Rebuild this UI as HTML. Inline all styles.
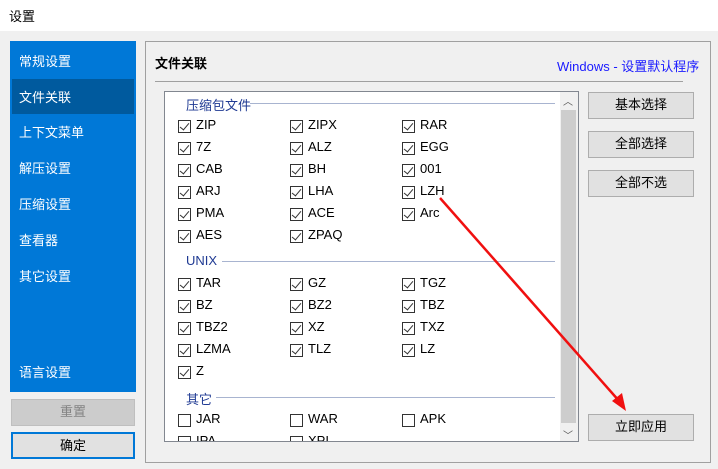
<!DOCTYPE html>
<html><head><meta charset="utf-8"><style>
*{margin:0;padding:0;box-sizing:border-box}
body{width:718px;height:469px;background:#f0f0f0;font-family:"Liberation Sans","Noto Sans CJK SC",sans-serif;font-size:13px;position:relative;overflow:hidden;color:#000}
.a{position:absolute;white-space:nowrap}
.side{left:10px;top:41px;width:126px;height:351px;background:#0078d7}
.si{position:absolute;left:9px;color:#fff;font-size:13px}
.btn{position:absolute;background:#e1e1e1;border:1px solid #adadad;text-align:center;line-height:24px;font-size:13px}
.cb{position:absolute;width:13px;height:13px;border:1px solid #333;background:#fff}
.cb.c::after{content:"";position:absolute;left:3px;top:0px;width:4px;height:8px;border:solid #333;border-width:0 1.5px 1.5px 0;transform:rotate(40deg)}
.lb{position:absolute;font-size:13px}
.gh{position:absolute;color:#1f3a93;font-size:13px}
.gl{position:absolute;height:1px;background:#a8b4d0}
</style></head><body>
<div class="a" style="left:0;top:0;width:718px;height:31px;background:#fff"></div>
<div class="a" style="left:9px;top:6px;font-size:13px">设置</div>
<div class="a side">
<div class="a" style="left:2px;top:38px;width:122px;height:35px;background:#005a9e"></div>
<div class="si" style="top:10px">常规设置</div>
<div class="si" style="top:46px">文件关联</div>
<div class="si" style="top:81px">上下文菜单</div>
<div class="si" style="top:117px">解压设置</div>
<div class="si" style="top:153px">压缩设置</div>
<div class="si" style="top:189px">查看器</div>
<div class="si" style="top:225px">其它设置</div>
<div class="si" style="top:321px">语言设置</div>
</div>
<div class="btn" style="left:11px;top:399px;width:124px;height:27px;background:#cccccc;border-color:#bfbfbf;color:#838383">重置</div>
<div class="btn" style="left:11px;top:432px;width:124px;height:27px;border:2px solid #0078d7;line-height:23px">确定</div>
<div class="a" style="left:145px;top:41px;width:566px;height:422px;border:1px solid #a0a0a0"></div>
<div class="a" style="left:155px;top:53px;font-weight:bold">文件关联</div>
<div class="a" style="left:557px;top:56px;color:#1a1aff">Windows - 设置默认程序</div>
<div class="a" style="left:155px;top:81px;width:528px;height:1px;background:#a0a0a0"></div>
<div class="a" style="left:164px;top:91px;width:415px;height:351px;background:#fff;border:1px solid #828790;overflow:hidden">
<div class="a" style="left:395px;top:0;width:18px;height:349px;background:#f0f0f0"></div>
<div class="a" style="left:396px;top:18px;width:15px;height:313px;background:#cdcdcd"></div>
<div class="a" style="left:398px;top:1px;font-size:10px;color:#555">︿</div>
<div class="a" style="left:398px;top:335px;font-size:10px;color:#555">﹀</div>
<div id="rows" class="a" style="left:-165px;top:-92px"></div>
</div>
<div class="gh" style="left:186px;top:95px">压缩包文件</div><div class="gl" style="left:250px;top:103px;width:305px"></div>
<div class="gh" style="left:186px;top:253px">UNIX</div><div class="gl" style="left:222px;top:261px;width:333px"></div>
<div class="gh" style="left:186px;top:389px">其它</div><div class="gl" style="left:216px;top:397px;width:339px"></div>
<div class="btn" style="left:588px;top:92px;width:106px;height:27px">基本选择</div>
<div class="btn" style="left:588px;top:131px;width:106px;height:27px">全部选择</div>
<div class="btn" style="left:588px;top:170px;width:106px;height:27px">全部不选</div>
<div class="btn" style="left:588px;top:414px;width:106px;height:27px">立即应用</div>
<svg class="a" style="left:0;top:0" width="718" height="469"><line x1="440" y1="198" x2="620" y2="402" stroke="#f01010" stroke-width="2.5"/><polygon points="626,411 612,401 622,393" fill="#f01010"/></svg>
<script>
var d=[[126,["ZIP","ZIPX","RAR"]],[148,["7Z","ALZ","EGG"]],[170,["CAB","BH","001"]],[192,["ARJ","LHA","LZH"]],[214,["PMA","ACE","Arc"]],[236,["AES","ZPAQ"]],[284,["TAR","GZ","TGZ"]],[306,["BZ","BZ2","TBZ"]],[328,["TBZ2","XZ","TXZ"]],[350,["LZMA","TLZ","LZ"]],[372,["Z"]],[420,["JAR","WAR","APK"],1],[442,["IPA","XPI"],1]];
var h="";d.forEach(function(r){r[1].forEach(function(t,i){var x=178+i*112;h+='<div class="cb'+(r[2]?'':' c')+'" style="left:'+x+'px;top:'+(r[0]-6)+'px"></div><div class="lb" style="left:'+(x+18)+'px;top:'+(r[0]-9)+'px">'+t+'</div>';});});
document.getElementById("rows").innerHTML=h;
</script>
</body></html>
